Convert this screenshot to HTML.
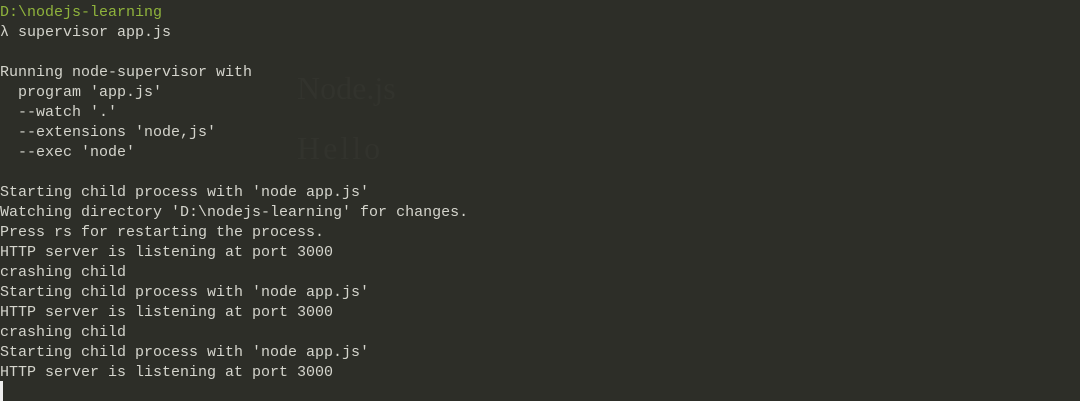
<!DOCTYPE html>
<html><head><meta charset="utf-8"><style>
html,body{margin:0;padding:0;width:1080px;height:401px;overflow:hidden;background:#2d2e28;}
.bg{position:absolute;font-family:"Liberation Serif","Noto Serif CJK SC",serif;color:#32332d;}
pre{position:absolute;left:0;top:3px;margin:0;font-family:"Liberation Mono",monospace;font-size:15px;line-height:20px;color:#d4d4cc;}
.g{color:#8fb33c;}
.cur{position:absolute;left:0;top:381px;width:3px;height:20px;background:#eee;}
</style></head><body>
<div class="bg" style="left:297px;top:70px;font-size:32px;">Node.js</div>
<div class="bg" style="left:297px;top:130px;font-size:32px;letter-spacing:3px;">Hello</div>
<pre><span class="g">D:\nodejs-learning</span>
λ supervisor app.js

Running node-supervisor with
  program 'app.js'
  --watch '.'
  --extensions 'node,js'
  --exec 'node'

Starting child process with 'node app.js'
Watching directory 'D:\nodejs-learning' for changes.
Press rs for restarting the process.
HTTP server is listening at port 3000
crashing child
Starting child process with 'node app.js'
HTTP server is listening at port 3000
crashing child
Starting child process with 'node app.js'
HTTP server is listening at port 3000</pre>
<div class="cur"></div>
</body></html>
